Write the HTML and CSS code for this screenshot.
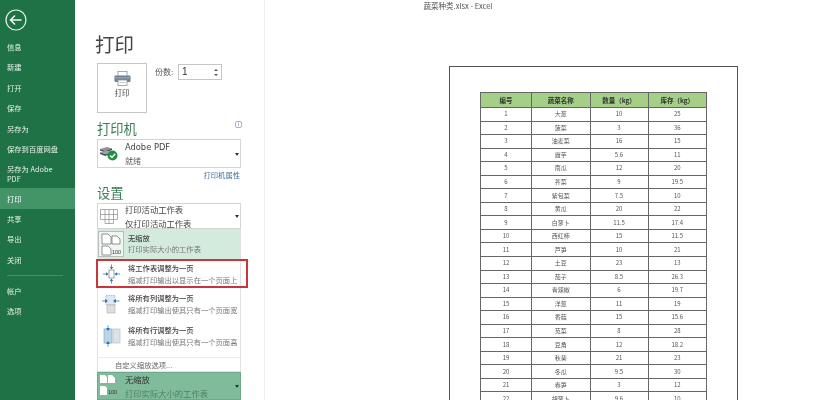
FILE: index.html
```html
<!DOCTYPE html>
<html lang="zh-CN">
<head>
<meta charset="utf-8">
<title>蔬菜种类.xlsx - Excel</title>
<link rel="stylesheet" href="styles.css">
</head>
<body>
<div class="app">
  <nav class="sidebar">
    <div class="back">
      <svg width="22" height="22" viewBox="0 0 22 22"><circle cx="11" cy="11" r="10" fill="none" stroke="#e8f3ec" stroke-width="1.2"/><path d="M5.5 11H16.5M10 6.5L5.5 11L10 15.5" fill="none" stroke="#f2f8f4" stroke-width="1.5"/></svg>
    </div>
    <a class="nav">信息</a>
    <a class="nav">新建</a>
    <a class="nav">打开</a>
    <a class="nav">保存</a>
    <a class="nav">另存为</a>
    <a class="nav">保存到百度网盘</a>
    <a class="nav nav-two">另存为 Adobe PDF</a>
    <a class="nav nav-active">打印</a>
    <a class="nav">共享</a>
    <a class="nav">导出</a>
    <a class="nav">关闭</a>
    <div class="nav-sep"></div>
    <a class="nav">帐户</a>
    <a class="nav">选项</a>
  </nav>

  <section class="panel">
    <h1 class="title">打印</h1>
    <div class="print-row">
      <button class="print-btn">
        <svg width="17" height="15" viewBox="0 0 17 15"><rect x="4" y="0.500" width="9" height="5" fill="#fff" stroke="#8a96a3" stroke-width="0.800"/><rect x="0.500" y="4.500" width="16" height="6.500" rx="1" fill="#6f8091"/><rect x="0.500" y="6" width="16" height="1.500" fill="#8fa0b0"/><rect x="4" y="9" width="9" height="5.500" fill="#fff" stroke="#8a96a3" stroke-width="0.800"/><path d="M5.500 11.500H11.500" stroke="#b5bec7" stroke-width="0.800"/></svg>
        <span>打印</span>
      </button>
      <label class="copies-label">份数:</label>
      <div class="copies-input">
        <span>1</span>
        <span class="spin"><i class="up"></i><i class="down"></i></span>
      </div>
    </div>

    <div class="heading-row">
      <h2 class="heading">打印机</h2>
      <span class="info">i</span>
    </div>
    <div class="select printer-select">
      <svg class="sel-icon" width="18" height="15" viewBox="0 0 18 15"><path d="M0 3L7 1L12 2.500L5 5Z" fill="#8d9299"/><path d="M0 3V4.500L5 6.500L12 4V2.500L5 5Z" fill="#3f4a55"/><path d="M0 6.500L7 4.500L11 6L5 8Z" fill="#9da2a8"/><path d="M0 6.500V8L5 10L9 8.500V7L5 8Z" fill="#4a5560"/><circle cx="12.500" cy="9.500" r="5" fill="#1c8f3f"/><path d="M10 9.500L12 11.500L15.200 7.700" fill="none" stroke="#fff" stroke-width="1.500"/></svg>
      <div class="sel-text">
        <span class="latin">Adobe PDF</span>
        <span class="sub">就绪</span>
      </div>
      <i class="caret"></i>
    </div>
    <a class="link">打印机属性</a>

    <h2 class="heading heading-settings">设置</h2>
    <div class="select sheet-select">
      <svg class="sel-icon" width="18" height="15" viewBox="0 0 18 15"><path d="M0.500 0.500H17.500V10.500H13.500V14.500H5V10.500H0.500ZM5 0.500V10.500M9 0.500V14.500M13.500 0.500V10.500M0.500 5.500H17.500M5 10.500H13.500" fill="none" stroke="#8b8b8b" stroke-width="0.700"/></svg>
      <div class="sel-text">
        <span>打印活动工作表</span>
        <span>仅打印活动工作表</span>
      </div>
      <i class="caret"></i>
    </div>

    <div class="menu">
      <div class="menu-item menu-selected">
        <div class="scale-icon">
          <svg width="24" height="24" viewBox="0 0 24 24"><path d="M3 2H9L12 5V12H3ZM13 4H18L21 7V12H13ZM3 14H9L12 17V23H3Z" fill="#fff" stroke="#666" stroke-width="0.700"/><text x="13" y="22" class="mini">100</text></svg>
        </div>
        <div class="item-text"><b>无缩放</b><span>打印实际大小的工作表</span></div>
      </div>
      <div class="menu-item menu-marked">
        <svg class="item-icon" width="20" height="20" viewBox="0 0 20 20"><rect x="8" y="6" width="5" height="8" fill="#fff" stroke="#777" stroke-width="0.700"/><path d="M10.500 0.500V5M10.500 15V19.500M2 10H7M14 10H19" stroke="#2e75b6" stroke-width="0.800"/><path d="M10.500 5.500L8.800 3H12.200ZM10.500 14.500L8.800 17H12.200ZM7.500 10L5 8.300V11.700ZM13.500 10L16 8.300V11.700Z" fill="#2e75b6"/></svg>
        <div class="item-text"><b>将工作表调整为一页</b><span>缩减打印输出以显示在一个页面上</span></div>
      </div>
      <div class="menu-item">
        <svg class="item-icon" width="20" height="20" viewBox="0 0 20 20"><path d="M5 1.500H14V11H5Z" fill="#dce8f3" stroke="#8ba6c2" stroke-width="0.700" stroke-dasharray="1.500 1"/><path d="M6 11H14V19H6Z" fill="#dedede" stroke="#aaa" stroke-width="0.600"/><path d="M1 7H6M13 7H18.500" stroke="#2e75b6" stroke-width="0.800"/><path d="M7 7L4 5V9ZM12 7L15 5V9Z" fill="#2e75b6"/></svg>
        <div class="item-text"><b>将所有列调整为一页</b><span>缩减打印输出使其只有一个页面宽</span></div>
      </div>
      <div class="menu-item">
        <svg class="item-icon" width="20" height="22" viewBox="0 0 20 22"><rect x="3" y="4" width="8" height="14" fill="#bcd3ea" stroke="#8ba6c2" stroke-width="0.700"/><rect x="12" y="4" width="7" height="14" fill="#dbe3ea" stroke="#b5c0cb" stroke-width="0.700"/><path d="M7 0.500V5M7 17V21.500" stroke="#2e75b6" stroke-width="0.800"/><path d="M7 6L5 3H9ZM7 16L5 19H9Z" fill="#2e75b6"/></svg>
        <div class="item-text"><b>将所有行调整为一页</b><span>缩减打印输出使其只有一个页面高</span></div>
      </div>
      <a class="custom">自定义缩放选项...</a>
    </div>
    <div class="select scale-select">
      <svg class="sel-icon" width="18" height="22" viewBox="0 0 18 22"><path d="M0 0H5L7 2V8H0ZM8 0H12L15 3V8H8ZM0 11H5L7 13V20H0Z" fill="#fff"/><text x="8" y="19" class="mini">100</text></svg>
      <div class="sel-text">
        <span>无缩放</span>
        <span class="sub-dark">打印实际大小的工作表</span>
      </div>
      <i class="caret"></i>
    </div>
  </section>

  <main class="preview">
    <header class="window-title">蔬菜种类.xlsx - Excel</header>
    <div class="page">
      <table class="sheet">
        <thead><tr><th>编号</th><th>蔬菜名称</th><th>数量（kg）</th><th>库存（kg）</th></tr></thead>
        <tbody>
          <tr><td>1</td><td>大葱</td><td>10</td><td>25</td></tr>
          <tr><td>2</td><td>菠菜</td><td>3</td><td>36</td></tr>
          <tr><td>3</td><td>油麦菜</td><td>16</td><td>15</td></tr>
          <tr><td>4</td><td>魔芋</td><td>5.6</td><td>11</td></tr>
          <tr><td>5</td><td>南瓜</td><td>12</td><td>20</td></tr>
          <tr><td>6</td><td>荠菜</td><td>9</td><td>19.5</td></tr>
          <tr><td>7</td><td>紫包菜</td><td>7.5</td><td>10</td></tr>
          <tr><td>8</td><td>黄瓜</td><td>20</td><td>22</td></tr>
          <tr><td>9</td><td>白萝卜</td><td>11.5</td><td>17.4</td></tr>
          <tr><td>10</td><td>西红柿</td><td>15</td><td>11.5</td></tr>
          <tr><td>11</td><td>芦笋</td><td>10</td><td>21</td></tr>
          <tr><td>12</td><td>土豆</td><td>23</td><td>13</td></tr>
          <tr><td>13</td><td>茄子</td><td>8.5</td><td>26.3</td></tr>
          <tr><td>14</td><td>青辣椒</td><td>6</td><td>19.7</td></tr>
          <tr><td>15</td><td>洋葱</td><td>11</td><td>19</td></tr>
          <tr><td>16</td><td>香菇</td><td>15</td><td>15.6</td></tr>
          <tr><td>17</td><td>苋菜</td><td>8</td><td>28</td></tr>
          <tr><td>18</td><td>豆角</td><td>12</td><td>18.2</td></tr>
          <tr><td>19</td><td>秋葵</td><td>21</td><td>23</td></tr>
          <tr><td>20</td><td>冬瓜</td><td>9.5</td><td>30</td></tr>
          <tr><td>21</td><td>春笋</td><td>3</td><td>12</td></tr>
          <tr><td>22</td><td>胡萝卜</td><td>9.6</td><td>10</td></tr>
        </tbody>
      </table>
    </div>
  </main>
</div>
</body>
</html>
```

FILE: styles.css
```css
* { box-sizing: border-box; }
html, body { margin: 0; height: 100%; background: #fff; }
body {
  overflow: hidden;
  font-family: "Noto Sans CJK SC", "Liberation Sans", sans-serif;
  color: #444;
}
.app { display: flex; width: 816px; height: 400px; overflow: hidden; filter: blur(0.35px); }

/* sidebar */
.sidebar {
  width: 75px; flex: none; height: 400px;
  background: #1f7246; color: #e6f1ea;
  display: flex; flex-direction: column;
  padding-top: 9px;
  font-size: 7.300px; line-height: 10px;
}
.back { height: 28px; padding-left: 5px; }
.back svg { display: block; }
.nav { display: block; height: 20.400px; padding: 5px 0 0 7px; }
.nav-two { height: 29.400px; padding-top: 4.500px; width: 60px; }
.nav-active { background: #439467; color: #fff; height: 21px; margin-top: -1px; padding-top: 6px; }
.nav-sep { height: 1px; background: #4a8c68; margin: 5px 12px 5px 7px; }

/* settings panel */
.panel {
  width: 190px; flex: none; height: 400px;
  padding: 29px 0 0 22px;
  border-right: 1px solid #eceff0;
}
.title { margin: 0 0 0 -2px; font-size: 19.500px; line-height: 29px; font-weight: 400; color: #444; }
.print-row { display: flex; align-items: flex-start; margin-top: 5px; }
.print-btn {
  width: 50px; height: 50px; padding: 7px 0 0;
  background: #fff; border: 1px solid #c6c6c6;
  display: flex; flex-direction: column; align-items: center;
  font: 7.500px/10px "Noto Sans CJK SC", sans-serif; color: #444;
}
.print-btn svg { display: block; margin-bottom: 2px; }
.copies-label { font-size: 8px; line-height: 12px; margin: 3px 0 0 8px; width: 23px; color: #555; }
.copies-input {
  width: 44px; height: 16px; margin-top: 1px;
  border: 1px solid #c6c6c6;
  font: 10px/14px "Liberation Sans", sans-serif; color: #333;
  padding-left: 3px; display: flex; justify-content: space-between;
}
.spin { width: 10px; display: flex; flex-direction: column; align-items: center; justify-content: center; gap: 3px; }
.up { border: 2px solid transparent; border-top: 0; border-bottom: 2.500px solid #555; }
.down { border: 2px solid transparent; border-bottom: 0; border-top: 2.500px solid #555; }

.heading-row { display: flex; justify-content: space-between; align-items: flex-start; width: 145px; margin-top: 6px; }
.heading { margin: 0; font-size: 13.300px; line-height: 20px; font-weight: 400; color: #3b7d58; }
.info {
  width: 7px; height: 7px; margin-top: 2px;
  border: 1px solid #9cb4cc; border-radius: 2px;
  font: 6px/5px "Liberation Sans", sans-serif; color: #5d87b2; text-align: center;
}
.select {
  width: 144px; border: 1px solid #d4d4d4;
  display: flex; align-items: center; position: relative;
  font-size: 8.300px; line-height: 14px;
}
.printer-select { height: 29px; }
.sheet-select { height: 26px; }
.sel-icon { flex: none; margin: 0 7px 0 2px; }
.sel-text { display: flex; flex-direction: column; white-space: nowrap; }
.latin { font: 8.300px/14px "DejaVu Sans", sans-serif; }
.sub { color: #666; font-size: 8px; }
.caret {
  position: absolute; right: 1px; top: 50%; margin-top: -1px;
  border: 2.500px solid transparent; border-bottom: 0; border-top: 3px solid #333;
}
.link { display: block; width: 144px; text-align: right; font-size: 7.300px; line-height: 10px; color: #3c6e9f; margin-top: 2px; padding-right: 1px; }
.heading-settings { margin-top: 3px; }

/* scaling menu */
.menu { width: 144px; border: 1px solid #e2e2e2; border-top: 0; height: 143px; }
.menu-item { display: flex; align-items: center; height: 32px; width: 142px; position: relative; padding-left: 3px; }
.menu-selected { height: 30px; background: #d3ebdd; padding-left: 1px; }
.scale-icon { width: 24px; height: 24px; margin-right: 5px; background: #eef6f1; outline: 1px solid #bcbcbc; }
.scale-icon svg, .item-icon { display: block; flex: none; }
.item-icon { margin-right: 7px; }
.item-text { display: flex; flex-direction: column; font-size: 7.300px; line-height: 12px; white-space: nowrap; color: #777; }
.item-text b { font-weight: 500; color: #444; }
.menu-selected .item-text { line-height: 11px; }
.menu-marked { height: 29px; margin: 0 0 0 -2px; width: 152px; border: 2px solid #c9353b; padding-left: 3px; }
.custom { display: block; font-size: 7.300px; line-height: 10px; color: #666; border-top: 1px solid #ebebeb; margin: 5px 0 0; padding: 2px 0 0 17px; }
.scale-select { height: 28px; background: #80bc9b; border-color: #6dac8a; color: #333; }
.sub-dark { color: #4f7f65; }
.mini { font: 5.500px "Liberation Sans", sans-serif; fill: #333; }

/* preview */
.preview { flex: 1; min-width: 0; display: flex; flex-direction: column; padding-left: 184px; }
.window-title { height: 12px; width: 288px; text-align: center; margin-left: -135px; font-size: 7.500px; line-height: 12px; color: #555; white-space: nowrap; }
.page {
  width: 289px; height: 360px; margin-top: 54px; flex: none;
  border: 1px solid #555; border-bottom: 0;
  padding: 25px 0 0 30px;
}
.sheet { border-collapse: collapse; table-layout: fixed; width: 226px; }
.sheet th, .sheet td { border: 1px solid #666; text-align: center; padding: 0; overflow: hidden; white-space: nowrap; }
.sheet th { background: #a4cf87; height: 15px; font-size: 6.500px; line-height: 12px; font-weight: 700; color: #333; }
.sheet th:nth-child(1) { width: 51px; }
.sheet th:nth-child(2) { width: 58.500px; }
.sheet th:nth-child(3) { width: 58px; }
.sheet th:nth-child(4) { width: 58.500px; }
.sheet td { height: 13.550px; font-size: 6px; line-height: 12px; color: #555; }
```
